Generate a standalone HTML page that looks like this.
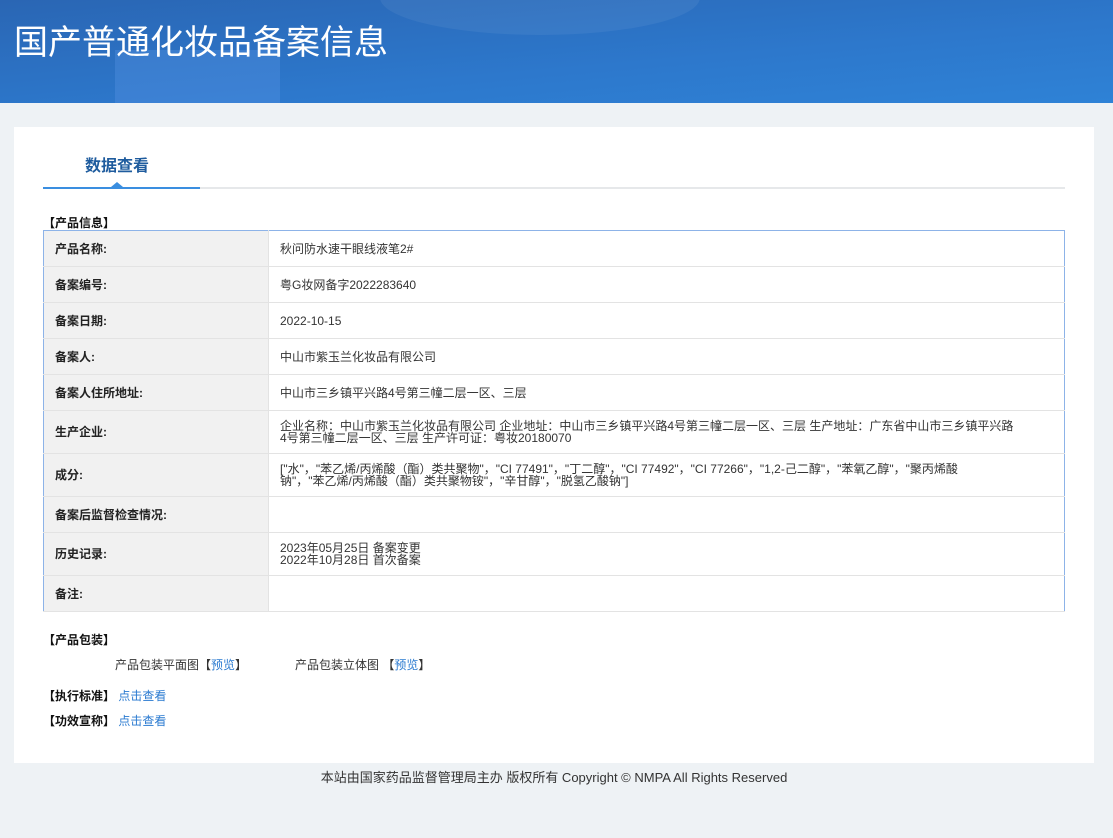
<!DOCTYPE html>
<html><head><meta charset="utf-8"><style>
*{margin:0;padding:0;box-sizing:border-box}
body{width:1113px;height:838px;background:#eef2f5;font-family:"Liberation Sans","Noto Sans CJK SC",sans-serif;font-size:12px;color:#333;position:relative;overflow:hidden}
.hd{position:absolute;left:0;top:0;width:1113px;height:103px;background:linear-gradient(175deg,#2a66b4 0%,#2d78cc 60%,#2e82d6 100%);overflow:hidden}
.hd .b1{position:absolute;left:115px;top:50px;width:165px;height:60px;background:rgba(90,150,230,.35)}
.hd .b2{position:absolute;left:380px;top:-40px;width:320px;height:75px;border-radius:50%;background:rgba(255,255,255,.06)}
.hd h1{position:absolute;left:14px;top:15px;font-size:34px;font-weight:normal;color:#fff;letter-spacing:0px}
.card{position:absolute;left:14px;top:127px;width:1080px;height:636px;background:#fff}
.tab{position:absolute;left:71px;top:25px;font-size:16px;font-weight:bold;color:#1f5c9e}
.line{position:absolute;left:29px;top:60px;width:1022px;height:2px;background:#e6e8ea}
.line2{position:absolute;left:29px;top:60px;width:157px;height:2px;background:#3a8ee0}
.tri{position:absolute;left:97px;top:55px;width:0;height:0;border-left:6px solid transparent;border-right:6px solid transparent;border-bottom:5px solid #3a8ee0}
.sec{position:absolute;font-weight:bold;font-size:12px;color:#111}
table{position:absolute;left:29px;top:103px;width:1022px;border-collapse:collapse;border:1px solid #8db3e8}
td{border-bottom:1px solid #e3e3e3;font-size:12px;line-height:12px;padding:0 11px;vertical-align:middle}
td.l{width:225px;background:#f1f1f1;font-weight:bold;color:#222;border-right:1px solid #e3e3e3}
a{color:#2a7ad0;text-decoration:none}
.ft{position:absolute;top:767px;left:0;width:1108px;text-align:center;font-size:13px;color:#333}
</style></head><body>
<div class="hd"><div class="b1"></div><div class="b2"></div><h1>国产普通化妆品备案信息</h1></div>
<div class="card">
<div class="tab">数据查看</div>
<div class="line"></div><div class="line2"></div><div class="tri"></div>
<div class="sec" style="left:29px;top:87px">【产品信息】</div>
<table>
<tr style="height:36px"><td class="l">产品名称:</td><td>秋问防水速干眼线液笔2#</td></tr>
<tr style="height:36px"><td class="l">备案编号:</td><td>粤G妆网备字2022283640</td></tr>
<tr style="height:36px"><td class="l">备案日期:</td><td>2022-10-15</td></tr>
<tr style="height:36px"><td class="l">备案人:</td><td>中山市紫玉兰化妆品有限公司</td></tr>
<tr style="height:36px"><td class="l">备案人住所地址:</td><td>中山市三乡镇平兴路4号第三幢二层一区、三层</td></tr>
<tr style="height:43px"><td class="l">生产企业:</td><td>企业名称：中山市紫玉兰化妆品有限公司 企业地址：中山市三乡镇平兴路4号第三幢二层一区、三层 生产地址：广东省中山市三乡镇平兴路<br>4号第三幢二层一区、三层 生产许可证：粤妆20180070</td></tr>
<tr style="height:43px"><td class="l">成分:</td><td>["水"，"苯乙烯/丙烯酸（酯）类共聚物"，"CI 77491"，"丁二醇"，"CI 77492"，"CI 77266"，"1,2-己二醇"，"苯氧乙醇"，"聚丙烯酸<br>钠"，"苯乙烯/丙烯酸（酯）类共聚物铵"，"辛甘醇"，"脱氢乙酸钠"]</td></tr>
<tr style="height:36px"><td class="l">备案后监督检查情况:</td><td></td></tr>
<tr style="height:43px"><td class="l">历史记录:</td><td>2023年05月25日 备案变更<br>2022年10月28日 首次备案</td></tr>
<tr style="height:36px"><td class="l">备注:</td><td></td></tr>
</table>
<div class="sec" style="left:29px;top:504px">【产品包装】</div>
<div style="position:absolute;left:101px;top:529px">产品包装平面图【<a>预览</a>】</div>
<div style="position:absolute;left:281px;top:529px">产品包装立体图 【<a>预览</a>】</div>
<div style="position:absolute;left:29px;top:560px"><b style="color:#111">【执行标准】</b> <a>点击查看</a></div>
<div style="position:absolute;left:29px;top:585px"><b style="color:#111">【功效宣称】</b> <a>点击查看</a></div>
</div>
<div class="ft">本站由国家药品监督管理局主办 版权所有 Copyright © NMPA All Rights Reserved</div>
</body></html>
